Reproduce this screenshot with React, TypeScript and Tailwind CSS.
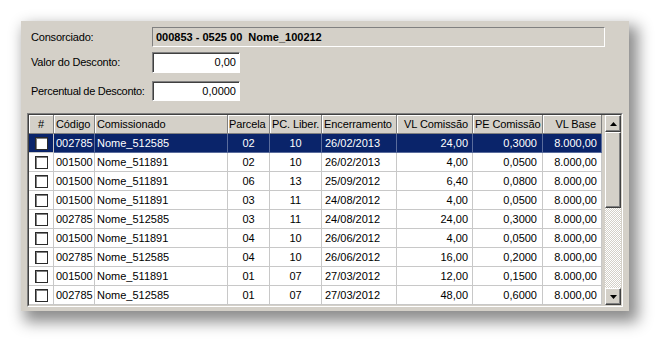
import React from 'react';

interface Col {
  label: string;
  w: string;
  head: string;
  cell: string;
}

const COLS: Col[] = [
  { label: '#', w: 'w-[25px]', head: 'justify-center', cell: 'justify-center' },
  { label: 'Código', w: 'w-[41px]', head: 'pl-[2px]', cell: 'pl-[2px]' },
  { label: 'Comissionado', w: 'w-[133px]', head: 'pl-[2px]', cell: 'pl-[2px]' },
  { label: 'Parcela', w: 'w-[42px]', head: 'pl-[1px]', cell: 'justify-center' },
  { label: 'PC. Liber.', w: 'w-[52px]', head: 'pl-[2px]', cell: 'justify-center' },
  { label: 'Encerramento', w: 'w-[75px]', head: 'pl-[2px]', cell: 'pl-[3px]' },
  { label: 'VL Comissão', w: 'w-[76px]', head: 'justify-end pr-[4px]', cell: 'justify-end pr-[4px]' },
  { label: 'PE Comissão', w: 'w-[70px]', head: 'pl-[2px]', cell: 'justify-end pr-[5px]' },
  { label: 'VL Base', w: 'w-[59px]', head: 'justify-end pr-[5px]', cell: 'justify-end pr-[4px]' },
];

// codigo, nome, parcela, pc liber, encerramento, vl comissao, pe comissao, vl base
const ROWS: string[][] = [
  ['002785', 'Nome_512585', '02', '10', '26/02/2013', '24,00', '0,3000', '8.000,00'],
  ['001500', 'Nome_511891', '02', '10', '26/02/2013', '4,00', '0,0500', '8.000,00'],
  ['001500', 'Nome_511891', '06', '13', '25/09/2012', '6,40', '0,0800', '8.000,00'],
  ['001500', 'Nome_511891', '03', '11', '24/08/2012', '4,00', '0,0500', '8.000,00'],
  ['002785', 'Nome_512585', '03', '11', '24/08/2012', '24,00', '0,3000', '8.000,00'],
  ['001500', 'Nome_511891', '04', '10', '26/06/2012', '4,00', '0,0500', '8.000,00'],
  ['002785', 'Nome_512585', '04', '10', '26/06/2012', '16,00', '0,2000', '8.000,00'],
  ['001500', 'Nome_511891', '01', '07', '27/03/2012', '12,00', '0,1500', '8.000,00'],
  ['002785', 'Nome_512585', '01', '07', '27/03/2012', '48,00', '0,6000', '8.000,00'],
];

const raised =
  'bg-[#d4d0c8] border border-t-white border-l-white border-r-[#404040] border-b-[#404040] shadow-[inset_-1px_-1px_0_#808080]';

function Arrow({ down }: { down?: boolean }) {
  return (
    <svg width="7" height="4" viewBox="0 0 7 4">
      {down ? <polygon points="0,0 7,0 3.5,4" fill="#000" /> : <polygon points="0,4 7,4 3.5,0" fill="#000" />}
    </svg>
  );
}

function Checkbox() {
  return <div className="w-[13px] h-[13px] bg-white border border-[#2a2a2a] shadow-[inset_1px_1px_0_#808080]" />;
}

function Scrollbar() {
  return (
    <div className="w-[16px] flex flex-col bg-[repeating-conic-gradient(#d4d0c8_0%_25%,#ffffff_0%_50%)] bg-[length:2px_2px]">
      <div className={`h-[17px] flex items-center justify-center ${raised}`}>
        <Arrow />
      </div>
      <div className={`h-[76px] ${raised}`} />
      <div className="flex-1" />
      <div className={`h-[17px] flex items-center justify-center ${raised}`}>
        <Arrow down />
      </div>
    </div>
  );
}

function Grid() {
  return (
    <div className="w-[596px] border border-t-[#808080] border-l-[#808080] border-r-white border-b-white">
      <div className="flex border border-t-[#404040] border-l-[#404040] border-r-[#d4d0c8] border-b-[#d4d0c8] bg-[#d4d0c8]">
        <div className="flex flex-col">
          {/* Header */}
          <div className="flex h-[19px] tracking-[-0.1px]">
            {COLS.map((c) => (
              <div
                key={c.label}
                className={`${c.w} ${c.head} flex items-center bg-[#d4d0c8] border-r border-b border-[#808080] shadow-[inset_1px_1px_0_#ffffff] whitespace-nowrap overflow-hidden`}
              >
                {c.label}
              </div>
            ))}
          </div>
          {/* Rows */}
          {ROWS.map((r, i) => {
            const sel = i === 0;
            return (
              <div key={i} className={`flex h-[19px] ${sel ? 'bg-[#0a246a] text-white' : 'bg-white text-black'}`}>
                <div className={`${COLS[0].w} flex items-center justify-center border-r border-b border-[#c8c8c8]`}>
                  <Checkbox />
                </div>
                {r.map((v, j) => (
                  <div
                    key={j}
                    className={`${COLS[j + 1].w} ${COLS[j + 1].cell} flex items-center border-r border-b ${sel ? 'border-[#5a6c9c]' : 'border-[#c8c8c8]'} whitespace-nowrap overflow-hidden`}
                  >
                    {v}
                  </div>
                ))}
              </div>
            );
          })}
        </div>
        <div className="w-[3px]" />
        <Scrollbar />
      </div>
    </div>
  );
}

export default function App() {
  return (
    <div className="w-[672px] h-[354px] bg-white pt-[21px] pl-[21px] font-['Liberation_Sans',Arial,sans-serif] text-[11px] text-black">
      <div className="w-[608px] h-[290px] bg-[#d4d0c8] pt-[6px] pl-[6px] shadow-[6px_8px_14px_3px_rgba(0,0,0,0.45)] flex flex-col">
        {/* Consorciado */}
        <div className="flex items-center h-[20px]">
          <div className="w-[125px] pl-[4px] tracking-[-0.2px]">Consorciado:</div>
          <div className="w-[453px] h-full flex items-center pl-[3px] font-bold whitespace-pre border border-t-[#808080] border-l-[#808080] border-r-white border-b-white">
            000853 - 0525 00  Nome_100212
          </div>
        </div>

        {/* Valor do Desconto */}
        <div className="flex items-center h-[21px] mt-[5px]">
          <div className="w-[125px] pl-[4px] tracking-[-0.2px]">Valor do Desconto:</div>
          <div className="w-[88px] h-full flex items-center justify-end pr-[3px] bg-white border border-t-[#808080] border-l-[#808080] border-r-white border-b-white shadow-[inset_1px_1px_0_#404040]">
            0,00
          </div>
        </div>

        {/* Percentual de Desconto */}
        <div className="flex items-center h-[20px] mt-[8px]">
          <div className="w-[125px] pl-[4px] whitespace-nowrap tracking-[-0.3px]">Percentual de Desconto:</div>
          <div className="w-[88px] h-full flex items-center justify-end pr-[3px] bg-white border border-t-[#808080] border-l-[#808080] border-r-white border-b-white shadow-[inset_1px_1px_0_#404040]">
            0,0000
          </div>
        </div>

        <div className="mt-[12px]">
          <Grid />
        </div>
      </div>
    </div>
  );
}
